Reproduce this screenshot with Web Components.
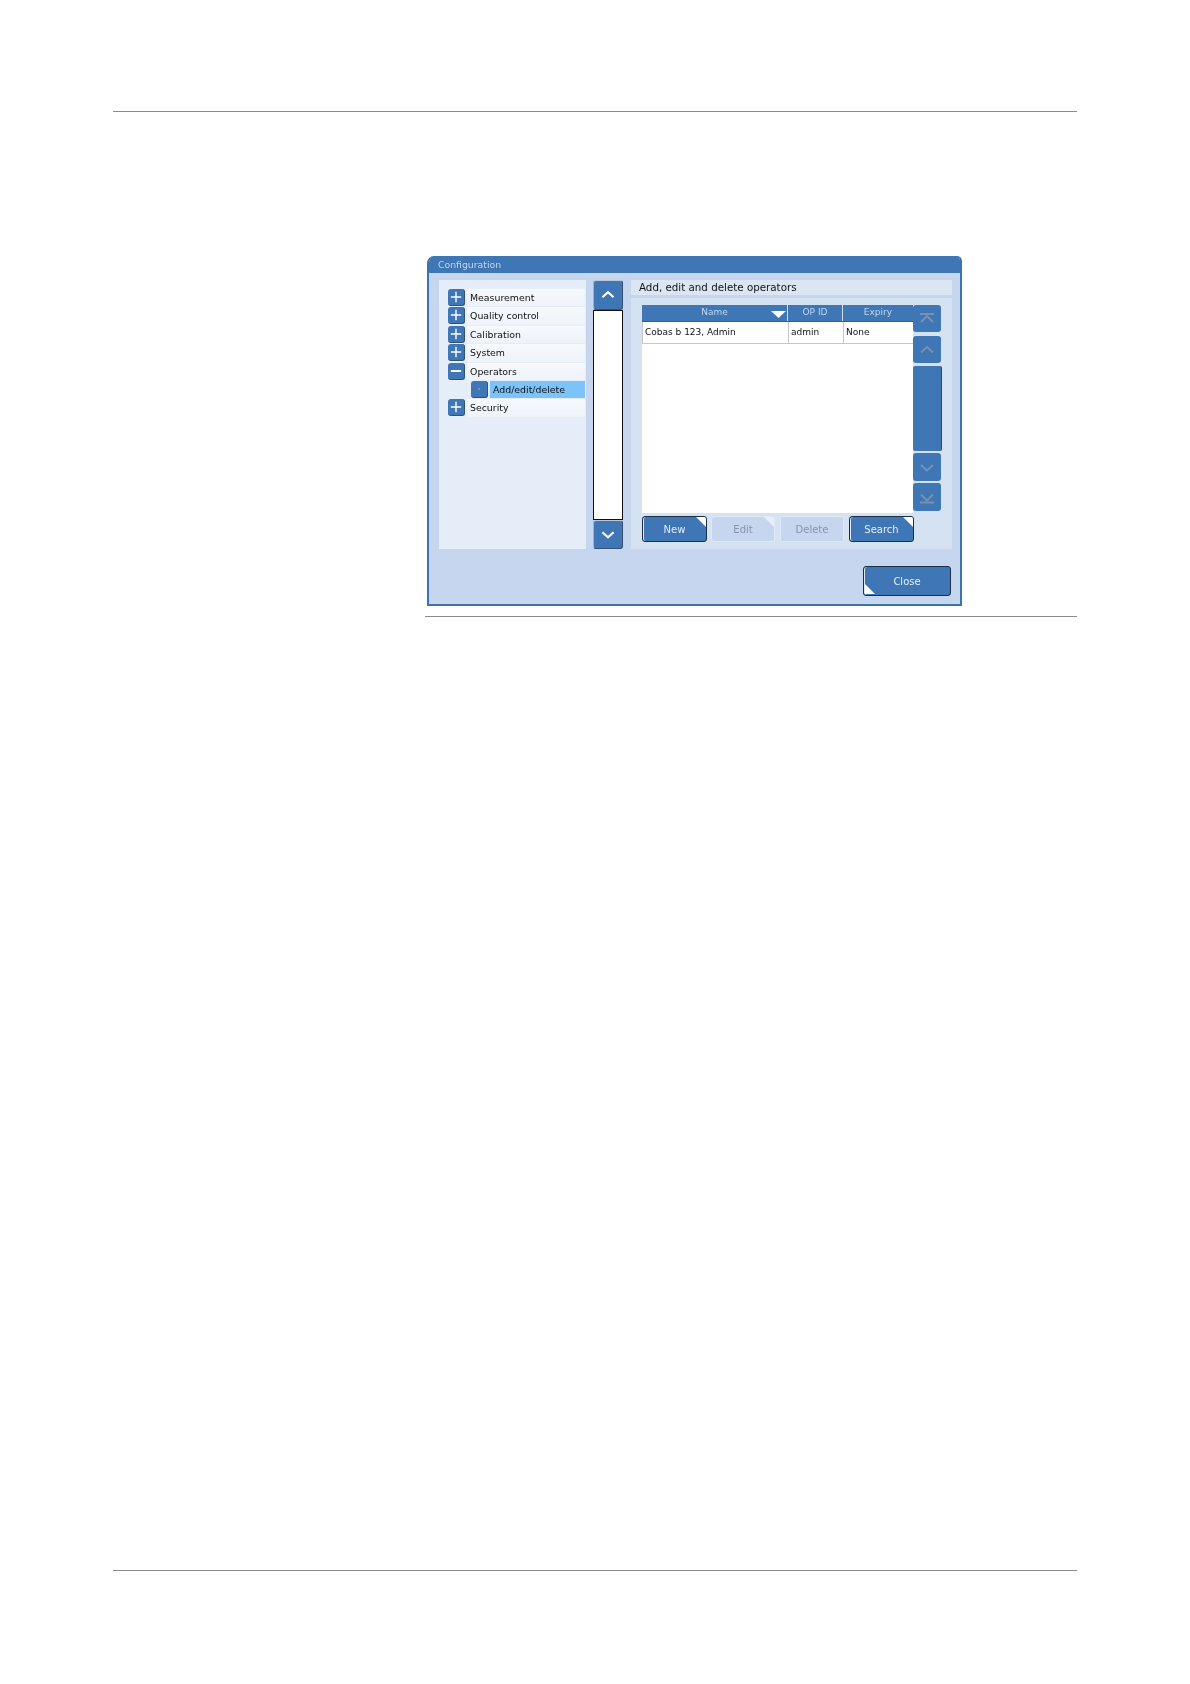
<!DOCTYPE html>
<html>
<head>
<meta charset="utf-8">
<title>Configuration</title>
<style>
    html, body { margin: 0; background: #fff; }
    body { font-family: "DejaVu Sans", sans-serif; }
</style>
</head>
<body>
<manual-page>
    <config-dialog heading="Configuration">
        <tree-panel slot="tree">
            <tree-row icon="plus">Measurement</tree-row>
            <tree-row icon="plus">Quality control</tree-row>
            <tree-row icon="plus">Calibration</tree-row>
            <tree-row icon="plus">System</tree-row>
            <tree-row icon="minus">Operators</tree-row>
            <tree-row icon="dot" child selected>Add/edit/delete</tree-row>
            <tree-row icon="plus">Security</tree-row>
        </tree-panel>
        <tree-scroll slot="scroll"></tree-scroll>
        <operator-panel slot="content" heading="Add, edit and delete operators">
            <operator-table slot="table"></operator-table>
            <table-scroll slot="scroll"></table-scroll>
            <ui-button slot="actions" corner="tr" style="width:65px">New</ui-button>
            <ui-button slot="actions" corner="tr" disabled style="width:64px;margin-left:4px">Edit</ui-button>
            <ui-button slot="actions" disabled style="width:64px;margin-left:5px">Delete</ui-button>
            <ui-button slot="actions" corner="tr" style="width:65px;margin-left:5px">Search</ui-button>
        </operator-panel>
        <ui-button slot="footer" corner="bl" style="width:88px;height:30px">Close</ui-button>
    </config-dialog>
</manual-page>

<script>
const ICONS = {
    plus: '<path d="M8.5 3v11M3 8.5h11" stroke-width="1.5"/>',
    minus: '<path d="M3 8.5h11" stroke-width="2"/>',
    dot: '<path d="M8 8.5h1" stroke-width="1"/>',
    up: '<path d="M9 17l6-5.5 6 5.5" stroke-width="2.2"/>',
    down: '<path d="M9 12l6 5.5 6-5.5" stroke-width="2.2"/>',
    first: '<path d="M7 9h14M8 17l6-6 6 6" stroke-width="2"/>',
    prev: '<path d="M8 16.5l6-5.5 6 5.5" stroke-width="2"/>',
    next: '<path d="M8 11.5l6 5.5 6-5.5" stroke-width="2"/>',
    last: '<path d="M7 19h14M8 11l6 6 6-6" stroke-width="2"/>'
};

class ManualPage extends HTMLElement {
    constructor() {
        super();
        this.attachShadow({ mode: 'open' }).innerHTML = `
            <style>
                :host { display: block; height: 1684px; padding-left: 113px; box-sizing: border-box; overflow: hidden; }
                .sheet { width: 964px; padding-top: 111px; }
                hr { height: 1px; margin: 0; border: 0; background: #8c8c8c; }
                .figure { margin: 144px 0 0 314px; }
                .under { margin: 10px 0 0 312px; }
                .foot { margin-top: 953px; }
            </style>
            <div class="sheet">
                <hr>
                <div class="figure"><slot></slot></div>
                <hr class="under">
                <hr class="foot">
            </div>
        `;
    }
}

class ConfigDialog extends HTMLElement {
    constructor() {
        super();
        this.attachShadow({ mode: 'open' }).innerHTML = `
            <style>
                :host { display: block; width: 535px; height: 350px; box-sizing: border-box; background: #c6d6ee;
                    border: 2px solid #3c72ad; border-top: 0; border-radius: 7px 5px 0 0; overflow: hidden; filter: blur(.3px); }
                .title { height: 17px; margin: 0 -2px; padding: 1px 0 0 11px; box-sizing: border-box; background: #3f76b5;
                    color: #c0d5ee; font-size: 9.3px; line-height: 15px; }
                .main { display: flex; padding: 7px 8px 0 10px; height: 269px; }
                .tree { display: block; width: 147px; margin-right: 7px; }
                .scroll { display: block; width: 30px; margin-right: 8px; }
                .content { display: block; width: 321px; }
                .footer { display: flex; justify-content: flex-end; padding: 17px 9px 0 0; }
            </style>
            <div class="title"></div>
            <div class="main">
                <div class="tree"><slot name="tree"></slot></div>
                <div class="scroll"><slot name="scroll"></slot></div>
                <div class="content"><slot name="content"></slot></div>
            </div>
            <div class="footer"><slot name="footer"></slot></div>
        `;
        this.shadowRoot.querySelector('.title').textContent = this.getAttribute('heading');
    }
}

class TreePanel extends HTMLElement {
    constructor() {
        super();
        this.attachShadow({ mode: 'open' }).innerHTML = `
            <style>
                :host { display: block; height: 269px; padding: 9px 1px 0 0; box-sizing: border-box; background: #e5eef8; }
            </style>
            <slot></slot>
        `;
    }
}

class TreeRow extends HTMLElement {
    constructor() {
        super();
        const child = this.hasAttribute('child');
        this.attachShadow({ mode: 'open' }).innerHTML = `
            <style>
                :host { display: flex; height: 18.4px; padding-left: ${child ? 32 : 9}px; align-items: stretch; }
                svg { flex: none; width: 17px; height: 17px; box-sizing: border-box; background: #3f76b5; border-radius: 3px;
                    border: 1px solid #35516f; border-width: 0 1px 1px 0; fill: none; stroke: #fff; }
                .label { flex: 1; margin: 0 0 1px 2px; padding-left: 3px; color: #111; font-size: 9.4px; line-height: 17px;
                    background: ${this.hasAttribute('selected') ? '#7cc3fa' : 'linear-gradient(#f6f9fd, #eef3fa)'}; }
            </style>
            <svg viewBox="0 0 17 17">${ICONS[this.getAttribute('icon')]}</svg>
            <div class="label"><slot></slot></div>
        `;
    }
}

class IconButton extends HTMLElement {
    constructor() {
        super();
        const off = this.hasAttribute('disabled');
        this.attachShadow({ mode: 'open' }).innerHTML = `
            <style>
                :host { display: block; height: ${this.getAttribute('h') || 27}px; box-sizing: border-box; background: #3f76b5; border-radius: 3px;
                    ${off ? '' : 'border: 1px solid #35516f; border-top-color: #b9c6d6; border-left-color: #9fb0c4;'} }
                svg { display: block; width: 100%; height: 100%; fill: none; stroke: ${off ? '#7a8fb0' : '#fff'}; }
            </style>
            <svg viewBox="0 0 ${off ? '28 27' : '30 29'}">${ICONS[this.getAttribute('icon')] || ''}</svg>
        `;
    }
}

class TreeScroll extends HTMLElement {
    constructor() {
        super();
        this.attachShadow({ mode: 'open' }).innerHTML = `
            <style>
                :host { display: flex; flex-direction: column; height: 269px; }
                .track { flex: 1; background: #fff; border: 1px solid #111; border-width: 1px 1.5px; }
            </style>
            <icon-button icon="up" h="30"></icon-button>
            <div class="track"></div>
            <icon-button icon="down" h="29"></icon-button>
        `;
    }
}

class TableScroll extends HTMLElement {
    constructor() {
        super();
        this.attachShadow({ mode: 'open' }).innerHTML = `
            <style>
                :host { display: flex; flex-direction: column; width: 28px; }
                .thumb { height: 85px; margin: 3px -1px 2px 0; background: #3f76b5; border-radius: 2px;
                    border-right: 1px solid #444; box-sizing: border-box; }
            </style>
            <icon-button icon="first" disabled style="margin-bottom:4px"></icon-button>
            <icon-button icon="prev" disabled></icon-button>
            <div class="thumb"></div>
            <icon-button icon="next" disabled h="28" style="margin-bottom:2px"></icon-button>
            <icon-button icon="last" disabled h="28"></icon-button>
        `;
    }
}

class OperatorPanel extends HTMLElement {
    constructor() {
        super();
        this.attachShadow({ mode: 'open' }).innerHTML = `
            <style>
                :host { display: flex; flex-direction: column; height: 269px; }
                .title { height: 15px; padding-left: 8px; background: #dbe6f2; color: #111; font-size: 10.3px; line-height: 14px; }
                .body { height: 251px; margin-top: 3px; padding: 7px 0 0 11px; box-sizing: border-box; background: #d4e2f1; }
                .top { display: flex; height: 208px; }
                .actions { display: flex; margin-top: 3px; }
            </style>
            <div class="title"></div>
            <div class="body">
                <div class="top"><slot name="table"></slot><slot name="scroll"></slot></div>
                <div class="actions"><slot name="actions"></slot></div>
            </div>
        `;
        this.shadowRoot.querySelector('.title').textContent = this.getAttribute('heading');
    }
}

class OperatorTable extends HTMLElement {
    constructor() {
        super();
        this.attachShadow({ mode: 'open' }).innerHTML = `
            <style>
                :host { display: block; width: 271px; height: 208px; background: #fff; font-size: 9px; }
                .row { display: grid; grid-template-columns: 146px 55px 70px; }
                .head { height: 16px; background: #3f76b5; color: #c4d7ef; line-height: 15px; text-align: center; border-bottom: 1px solid #2f5f99; box-sizing: content-box; }
                .head div { position: relative; border-right: 1px solid #cfdded; }
                .head div:last-child { border: 0; }
                .head svg { position: absolute; right: 1px; top: 6px; width: 15px; height: 7px; fill: #fff; }
                .cells { height: 22px; color: #111; line-height: 21px; border-bottom: 1px solid #c4c8cc; box-sizing: border-box; border-left: 1px solid #c4c8cc; }
                .cells div { padding-left: 2px; border-right: 1px solid #c4c8cc; }
                .cells div:last-child { border: 0; }
            </style>
            <div class="row head">
                <div>Name<svg viewBox="0 0 15 7"><path d="M0 0h15L7.5 7z"/></svg></div>
                <div>OP ID</div>
                <div>Expiry</div>
            </div>
            <div class="row cells">
                <div>Cobas b 123, Admin</div>
                <div>admin</div>
                <div>None</div>
            </div>
        `;
    }
}

class UiButton extends HTMLElement {
    constructor() {
        super();
        const corner = this.getAttribute('corner');
        const off = this.hasAttribute('disabled');
        const tri = corner === 'bl'
            ? 'left: 1px; bottom: 1px; clip-path: polygon(0 0, 100% 100%, 0 100%);'
            : 'right: 0; top: 0; clip-path: polygon(0 0, 100% 0, 100% 100%);';
        this.attachShadow({ mode: 'open' }).innerHTML = `
            <style>
                :host { display: flex; position: relative; height: 26px; box-sizing: border-box; align-items: center; justify-content: center;
                    border-radius: 3px; font-size: 10px; overflow: hidden;
                    background: ${off ? '#c6d6ee' : '#3f76b5'}; color: ${off ? '#8795ab' : '#e6eefa'};
                    border: 1px solid ${off ? '#dfe9f5' : '#1d2f45'}; ${off ? '' : 'box-shadow: inset 1px 0 0 #dfe8f3;'} }
                .corner { position: absolute; width: 10px; height: 10px; background: ${off ? '#e6eef8' : '#fff'}; ${tri} }
            </style>
            <slot></slot>
            ${corner ? '<div class="corner"></div>' : ''}
        `;
    }
}

// children are parsed already, so define inner elements first
customElements.define('icon-button', IconButton);
customElements.define('ui-button', UiButton);
customElements.define('tree-row', TreeRow);
customElements.define('tree-panel', TreePanel);
customElements.define('tree-scroll', TreeScroll);
customElements.define('table-scroll', TableScroll);
customElements.define('operator-table', OperatorTable);
customElements.define('operator-panel', OperatorPanel);
customElements.define('config-dialog', ConfigDialog);
customElements.define('manual-page', ManualPage);
</script>
</body>
</html>
